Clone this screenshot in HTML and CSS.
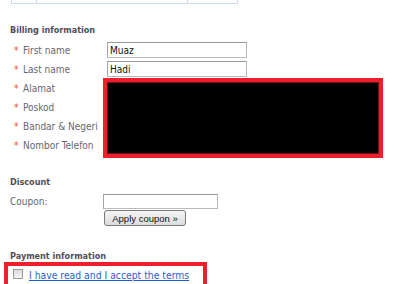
FILE: index.html
```html
<!DOCTYPE html>
<html lang="en">
<head>
    <meta charset="UTF-8">
    <title>Checkout</title>
    <link rel="stylesheet" href="styles.css">
</head>
<body>
    <div class="cart-edge">
        <span class="c1"></span><span class="c2"></span><span class="c3"></span>
    </div>

    <div class="block">
        <h3>Billing information</h3>
        <div class="fields">
            <label class="req">First name</label>
            <input class="text" type="text" value="Muaz">
            <label class="req">Last name</label>
            <input class="text" type="text" value="Hadi">
            <label class="req">Alamat</label>
            <div class="redact"></div>
            <label class="req">Poskod</label>
            <label class="req">Bandar &amp; Negeri</label>
            <label class="req">Nombor Telefon</label>
        </div>
    </div>

    <div class="block discount">
        <h3>Discount</h3>
        <div class="coupon">
            <label>Coupon:</label>
            <div class="coupon-field">
                <input class="text wide" type="text">
                <button class="btn" type="button">Apply coupon &raquo;</button>
            </div>
        </div>
    </div>

    <div class="block payment">
        <h3>Payment information</h3>
        <div class="terms">
            <span class="check"></span>
            <a href="#">I have read and I accept the terms</a>
        </div>
    </div>
</body>
</html>
```
FILE: styles.css
```css
* {
    margin: 0;
    padding: 0;
    box-sizing: border-box;
}
body {
    background: #fff;
    font-family: "DejaVu Sans Condensed", "DejaVu Sans", sans-serif;
    font-size: 10px;
    color: #666672;
}
.cart-edge {
    display: flex;
    margin-left: 11px;
    width: 227px;
    height: 4px;
    border-left: 1px solid #cfdcf0;
    border-bottom: 1px solid #cfdcf0;
}
.cart-edge span {
    border-right: 1px solid #cfdcf0;
}
.c1 { width: 25px; }
.c2 { width: 151px; }
.c3 { width: 50px; }

.block {
    padding-left: 10px;
}
h3 {
    font-size: 9px;
    font-weight: bold;
    color: #4e4e5c;
    line-height: 14px;
    margin-top: 19px;
    margin-bottom: 4px;
}
.fields {
    display: grid;
    grid-template-columns: 93px 1fr;
    grid-auto-rows: 19px;
}
.fields label {
    grid-column: 1;
    display: flex;
    align-items: center;
}
.req {
    padding-left: 4px;
}
.req::before {
    content: "*";
    color: #f0502c;
    width: 9px;
}
.text {
    border: 1px solid #b8b8b8;
    border-top-color: #9a9a9a;
    border-left-color: #a5a5a5;
    background: #fff;
    font-family: "DejaVu Sans Condensed", "DejaVu Sans", sans-serif;
    font-size: 10px;
    color: #111;
    padding: 0 2px;
    outline: none;
}
.fields .text {
    grid-column: 2;
    width: 140px;
    height: 16px;
    margin: 1px 0 0 4px;
}
.redact {
    grid-column: 2;
    grid-row: span 4;
    width: 280px;
    margin-top: -1px;
    margin-bottom: -3px;
    background: #000;
    border: 4px solid #ec1f2b;
    box-shadow: inset 0 0 0 1px #7a1016;
}

.discount h3 {
    margin-top: 20px;
    margin-bottom: 5px;
}
.coupon {
    display: grid;
    grid-template-columns: 93px 1fr;
}
.coupon label {
    height: 15px;
    display: flex;
    align-items: center;
}
.wide {
    display: block;
    width: 115px;
    height: 15px;
}
.btn {
    display: block;
    margin: 1px 0 0 1px;
    width: 82px;
    height: 16px;
    border: 1px solid #7a7a7a;
    border-radius: 3px;
    background: linear-gradient(#f4f4f4, #dcdcdc);
    font-family: "Liberation Sans", Arial, sans-serif;
    font-size: 9.5px;
    color: #111;
}

.payment {
    padding-left: 4px;
}
.payment h3 {
    padding-left: 6px;
    margin-top: 23px;
    margin-bottom: -1px;
}
.terms {
    width: 203px;
    height: 30px;
    border: 4px solid #ec1f2b;
    border-bottom: none;
    display: flex;
    align-items: flex-start;
    padding: 2px 0 0 5px;
}
.check {
    width: 10px;
    height: 10px;
    border: 1px solid #9c9c9c;
    background: linear-gradient(#dcdcdc, #f6f6f6);
    margin-top: 1px;
    margin-right: 6px;
}
.terms a {
    color: #1f5fd0;
    font-size: 10.3px;
    line-height: 12px;
    margin-top: 1px;
}
```
